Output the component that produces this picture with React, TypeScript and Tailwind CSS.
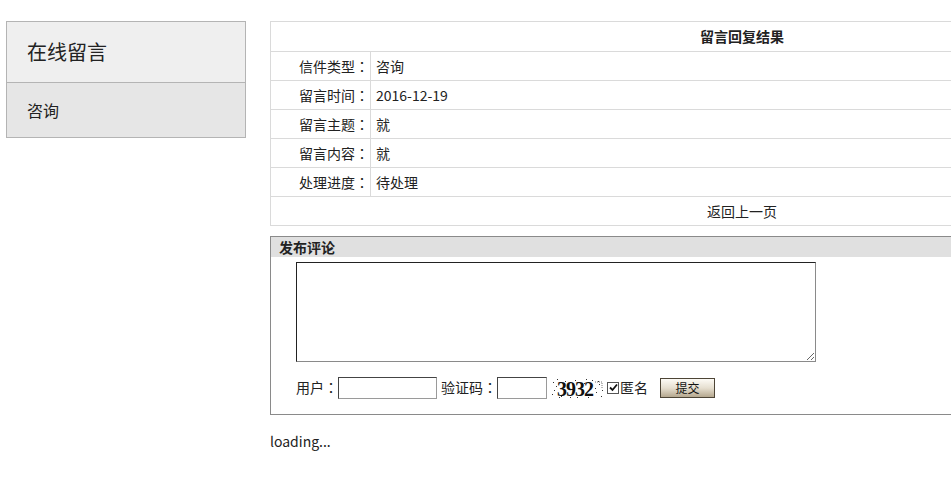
import { useState } from "react";

const rows: [string, string][] = [
  ["信件类型", "咨询"],
  ["留言时间", "2016-12-19"],
  ["留言主题", "就"],
  ["留言内容", "就"],
  ["处理进度", "待处理"],
];

// full-width colon drawn centred, as the page's font does
function Colon() {
  return <span className="font-['Noto_Sans_CJK_TC',sans-serif]">：</span>;
}

function Captcha() {
  // noisy captcha image, digits kept as real text
  const dots = [
    [2, 4], [6, 1], [10, 18], [14, 3], [19, 19], [24, 2], [28, 17], [33, 5], [37, 19],
    [41, 2], [45, 14], [48, 6], [50, 18], [3, 12], [22, 9], [31, 11], [44, 10], [8, 19],
    [17, 7], [39, 8], [26, 19], [12, 9], [47, 3], [35, 1], [1, 16], [5, 8], [51, 12],
  ];
  return (
    <span className="relative inline-flex h-[22px] w-[54px] items-center justify-center">
      <svg className="absolute inset-0" width="54" height="22" viewBox="0 0 54 22">
        {dots.map(([x, y], i) => (
          <rect key={i} x={x} y={y} width="1" height="1" fill="#333" />
        ))}
        <path d="M44 4 L51 4 L51 10" stroke="#555" strokeWidth="0.8" fill="none" strokeDasharray="1 1" />
      </svg>
      <span className="relative -ml-[6px] font-['Liberation_Serif',serif] text-[20px] font-bold leading-none tracking-[-1px] text-[#111]">
        3932
      </span>
    </span>
  );
}

export default function App() {
  const [text, setText] = useState("");
  const [user, setUser] = useState("");
  const [code, setCode] = useState("");
  const [anon, setAnon] = useState(true);

  return (
    <div className="h-[487px] w-full overflow-hidden bg-white font-['Noto_Sans_CJK_SC','Noto_Sans',sans-serif] text-[#222]">
      <div className="flex items-start pl-[6px] pt-[21px]">
        <div className="w-[240px] shrink-0 border border-[#b4b4b4]">
          <div className="flex h-[60px] items-center bg-[#efefef] pl-[20px] text-[20px]">在线留言</div>
          <div className="flex h-[55px] items-center border-t border-[#b4b4b4] bg-[#e6e6e6] pl-[20px] text-[16px]">
            咨询
          </div>
        </div>

        <div className="ml-[24px] w-[944px] shrink-0">
          <div className="border border-[#dadada] text-[14px]">
            <div className="flex h-[30px] items-center justify-center border-b border-[#dadada] text-[14px] font-bold">
              留言回复结果
            </div>
            {rows.map(([label, value]) => (
              <div key={label} className="flex h-[29px] items-center border-b border-[#dadada]">
                <div className="flex h-full w-[100px] items-center justify-end border-r border-[#dadada] pr-[1px]">
                  {label}
                  <Colon />
                </div>
                <div className="pl-[5px]">{value}</div>
              </div>
            ))}
            <div className="flex h-[28px] items-center justify-center">
              <a href="#" className="text-[#222]">
                返回上一页
              </a>
            </div>
          </div>

          <div className="mt-[10px] border border-[#8a8a8a] pb-[15px]">
            <div className="flex h-[20px] items-center bg-[#e0e0e0] pl-[8px] text-[14px] font-bold">发布评论</div>
            <textarea
              value={text}
              onChange={(e) => setText(e.target.value)}
              className="mt-[5px] ml-[25px] block h-[100px] w-[520px] border border-[#8a8a8a] border-t-[#222] border-l-[#222] bg-white outline-none"
            />
            <div className="mt-[14px] ml-[25px] flex h-[23px] items-center text-[14px]">
              <span>
                用户
                <Colon />
              </span>
              <input
                value={user}
                onChange={(e) => setUser(e.target.value)}
                className="h-[22px] w-[99px] border border-[#9a9a9a] border-t-[#444] border-l-[#444] outline-none"
              />
              <span className="ml-[4px]">
                验证码
                <Colon />
              </span>
              <input
                value={code}
                onChange={(e) => setCode(e.target.value)}
                className="h-[22px] w-[50px] border border-[#9a9a9a] border-t-[#444] border-l-[#444] outline-none"
              />
              <span className="ml-[4px] mt-[3px]">
                <Captcha />
              </span>
              <label className="ml-[2px] flex cursor-pointer items-center" onClick={() => setAnon(!anon)}>
                <span className="flex h-[12px] w-[12px] items-center justify-center border border-[#555] bg-white">
                  {anon ? (
                    <svg width="9" height="9" viewBox="0 0 9 9">
                      <path d="M1 4.5 L3.5 7 L8 1.5" stroke="#111" strokeWidth="1.8" fill="none" />
                    </svg>
                  ) : null}
                </span>
                <span className="ml-[1px]">匿名</span>
              </label>
              <button
                type="button"
                className="ml-[12px] flex h-[20px] w-[55px] items-center justify-center border border-[#4d4536] bg-gradient-to-b from-[#fdfbf6] via-[#e6dfd0] to-[#b5a88f] text-[12px] text-[#111]"
              >
                提交
              </button>
            </div>
          </div>

          <div className="mt-[16px] text-[14px]">loading...</div>
        </div>
      </div>
    </div>
  );
}
